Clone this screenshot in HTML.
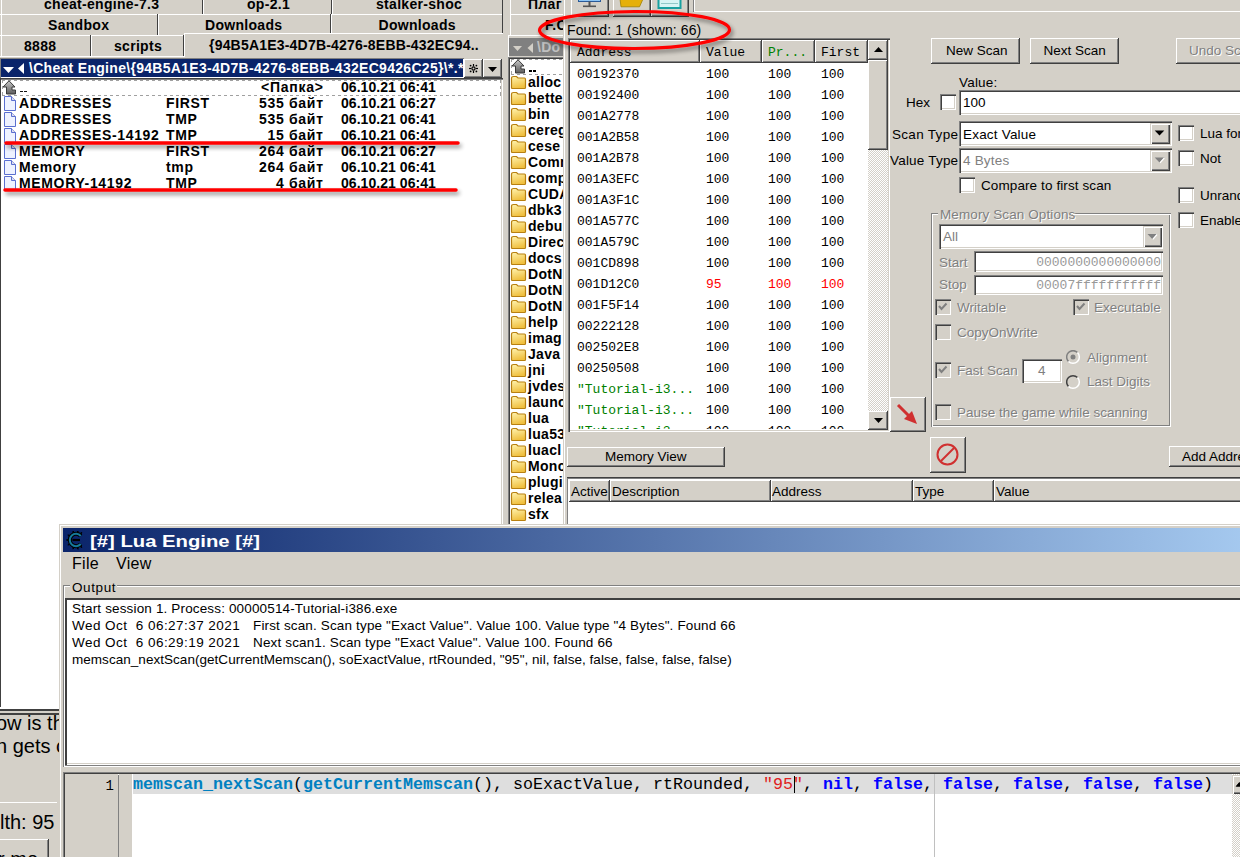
<!DOCTYPE html><html><head><meta charset="utf-8"><style>
html,body{margin:0;padding:0}
body{width:1240px;height:857px;overflow:hidden;background:#d4d0c8;position:relative;font-family:"Liberation Sans",sans-serif;color:#000}
.a{position:absolute;box-sizing:border-box}
.t{position:absolute;white-space:pre;line-height:1}
</style></head><body>
<div class="a" style="left:0px;top:-5px;width:203px;height:19px;background:#d4d0c8;"></div>
<div class="a" style="left:0px;top:-5px;width:203px;height:1px;background:#fff;"></div>
<div class="a" style="left:1px;top:-5px;width:1px;height:19px;background:#fff;"></div>
<div class="a" style="left:202px;top:-5px;width:1px;height:19px;background:#404040;"></div>
<div class="t" style="left:44px;top:-2.85px;font-size:14px;font-weight:bold;letter-spacing:0.3px;">cheat-engine-7.3</div>
<div class="a" style="left:203px;top:-5px;width:129px;height:19px;background:#d4d0c8;"></div>
<div class="a" style="left:203px;top:-5px;width:129px;height:1px;background:#fff;"></div>
<div class="a" style="left:203px;top:-5px;width:1px;height:19px;background:#fff;"></div>
<div class="a" style="left:331px;top:-5px;width:1px;height:19px;background:#404040;"></div>
<div class="t" style="left:247px;top:-2.85px;font-size:14px;font-weight:bold;letter-spacing:0.3px;">op-2.1</div>
<div class="a" style="left:332px;top:-5px;width:171px;height:19px;background:#d4d0c8;"></div>
<div class="a" style="left:332px;top:-5px;width:171px;height:1px;background:#fff;"></div>
<div class="a" style="left:332px;top:-5px;width:1px;height:19px;background:#fff;"></div>
<div class="a" style="left:502px;top:-5px;width:1px;height:19px;background:#404040;"></div>
<div class="t" style="left:376px;top:-2.85px;font-size:14px;font-weight:bold;letter-spacing:0.3px;">stalker-shoc</div>
<div class="a" style="left:0px;top:14px;width:158px;height:21px;background:#d4d0c8;"></div>
<div class="a" style="left:0px;top:14px;width:158px;height:1px;background:#fff;"></div>
<div class="a" style="left:1px;top:14px;width:1px;height:21px;background:#fff;"></div>
<div class="a" style="left:157px;top:14px;width:1px;height:21px;background:#404040;"></div>
<div class="t" style="left:48px;top:18.15px;font-size:14px;font-weight:bold;letter-spacing:0.3px;">Sandbox</div>
<div class="a" style="left:158px;top:14px;width:173px;height:21px;background:#d4d0c8;"></div>
<div class="a" style="left:158px;top:14px;width:173px;height:1px;background:#fff;"></div>
<div class="a" style="left:158px;top:14px;width:1px;height:21px;background:#fff;"></div>
<div class="a" style="left:330px;top:14px;width:1px;height:21px;background:#404040;"></div>
<div class="t" style="left:205px;top:18.15px;font-size:14px;font-weight:bold;letter-spacing:0.3px;">Downloads</div>
<div class="a" style="left:331px;top:14px;width:172px;height:21px;background:#d4d0c8;"></div>
<div class="a" style="left:331px;top:14px;width:172px;height:1px;background:#fff;"></div>
<div class="a" style="left:331px;top:14px;width:1px;height:21px;background:#fff;"></div>
<div class="a" style="left:502px;top:14px;width:1px;height:21px;background:#404040;"></div>
<div class="t" style="left:378.5px;top:18.15px;font-size:14px;font-weight:bold;letter-spacing:0.3px;">Downloads</div>
<div class="a" style="left:0px;top:35px;width:91px;height:22px;background:#d4d0c8;"></div>
<div class="a" style="left:0px;top:35px;width:91px;height:1px;background:#fff;"></div>
<div class="a" style="left:1px;top:35px;width:1px;height:22px;background:#fff;"></div>
<div class="a" style="left:90px;top:35px;width:1px;height:22px;background:#404040;"></div>
<div class="t" style="left:24px;top:39.15px;font-size:14px;font-weight:bold;letter-spacing:0.3px;">8888</div>
<div class="a" style="left:91px;top:35px;width:93px;height:22px;background:#d4d0c8;"></div>
<div class="a" style="left:91px;top:35px;width:93px;height:1px;background:#fff;"></div>
<div class="a" style="left:91px;top:35px;width:1px;height:22px;background:#fff;"></div>
<div class="a" style="left:183px;top:35px;width:1px;height:22px;background:#404040;"></div>
<div class="t" style="left:114px;top:39.15px;font-size:14px;font-weight:bold;letter-spacing:0.3px;">scripts</div>
<div class="a" style="left:0px;top:56px;width:184px;height:1px;background:#fff;"></div>
<div class="a" style="left:184px;top:33px;width:320px;height:25px;background:#d4d0c8;"></div>
<div class="a" style="left:503px;top:35px;width:1px;height:22px;background:#808080;"></div>
<div class="a" style="left:184px;top:33px;width:319px;height:1px;background:#fff;"></div>
<div class="a" style="left:184px;top:33px;width:1px;height:25px;background:#fff;"></div>
<div class="t" style="left:209px;top:38.15px;font-size:14px;font-weight:bold;letter-spacing:0.2px;">{94B5A1E3-4D7B-4276-8EBB-432EC94..</div>
<div class="a" style="left:0px;top:57px;width:504px;height:22px;background:#d4d0c8;"></div>
<div class="a" style="left:0px;top:58px;width:464px;height:20px;box-shadow:inset 1px 1px #808080,inset -1px -1px #fff;"></div>
<div class="a" style="left:1px;top:59px;width:462px;height:18px;background:#0a246a;"></div>
<svg class="a" style="left:0px;top:60px" width="30" height="16"><polygon points="3,7 14,7 8.5,13" fill="#fff"/><polygon points="24,3 24,14 18,8.5" fill="#fff"/></svg>
<div class="t" style="left:29px;top:61.15px;font-size:14px;font-weight:bold;color:#fff;letter-spacing:0.3px;">\Cheat Engine\{94B5A1E3-4D7B-4276-8EBB-432EC9426C25}\*.*</div>
<div class="a" style="left:464px;top:59px;width:19px;height:19px;background:#d4d0c8;box-shadow:inset -1px -1px #404040,inset 1px 1px #fff,inset -2px -2px #808080;"></div>
<svg class="a" style="left:464px;top:59px" width="19" height="19"><g stroke="#000" stroke-width="1.2"><circle cx="9.5" cy="9.5" r="1.6" fill="none"/><line x1="9.5" y1="5" x2="9.5" y2="7.2"/><line x1="9.5" y1="11.8" x2="9.5" y2="14"/><line x1="5" y1="9.5" x2="7.2" y2="9.5"/><line x1="11.8" y1="9.5" x2="14" y2="9.5"/></g><g fill="#000"><circle cx="6.6" cy="6.6" r="0.9"/><circle cx="12.4" cy="6.6" r="0.9"/><circle cx="6.6" cy="12.4" r="0.9"/><circle cx="12.4" cy="12.4" r="0.9"/></g></svg>
<div class="a" style="left:483px;top:59px;width:19px;height:19px;background:#d4d0c8;box-shadow:inset -1px -1px #404040,inset 1px 1px #fff,inset -2px -2px #808080;"></div>
<svg class="a" style="left:483px;top:59px" width="19" height="19"><polygon points="5,8 14,8 9.5,13" fill="#000"/></svg>
<div class="a" style="left:0px;top:78px;width:503px;height:630px;background:#fff;box-shadow:inset 1px 1px #404040,inset 0 2px #808080,inset -1px 0 #fff,inset -2px 0 #d4d0c8;"></div>
<div class="a" style="left:503px;top:35px;width:1px;height:672px;background:#808080;"></div>
<div class="a" style="left:2px;top:80px;width:499px;height:1px;background:repeating-linear-gradient(90deg,#a0a0a0 0 3px,transparent 3px 6px);"></div>
<div class="a" style="left:2px;top:95px;width:499px;height:1px;background:repeating-linear-gradient(90deg,#a0a0a0 0 3px,transparent 3px 6px);"></div>
<div class="a" style="left:2px;top:80px;width:1px;height:16px;background:repeating-linear-gradient(180deg,#a0a0a0 0 3px,transparent 3px 6px);"></div>
<div class="a" style="left:500px;top:80px;width:1px;height:16px;background:repeating-linear-gradient(180deg,#a0a0a0 0 3px,transparent 3px 6px);"></div>
<svg class="a" style="left:3px;top:80px" width="16" height="16" viewBox="0 0 16 16"><defs><linearGradient id="ug3" x1="0" y1="0" x2="0" y2="1"><stop offset="0" stop-color="#c8c8c8"/><stop offset="1" stop-color="#5a5a5a"/></linearGradient></defs><path d="M6,0.8 L12,7 L9,7 L9,10 L12.5,10 L12.5,14 L3.5,14 L3.5,7 L0,7 Z" fill="url(#ug3)" stroke="#3a3a3a" stroke-width="1" stroke-linejoin="round"/></svg>
<div class="a" style="left:20px;top:91px;width:2.5px;height:1.4px;background:#111;"></div>
<div class="a" style="left:24px;top:91px;width:2.5px;height:1.4px;background:#111;"></div>
<div class="t" style="left:341px;top:80.15px;font-size:14px;font-weight:bold;letter-spacing:0.05px;">06.10.21 06:41</div>
<div class="t" style="left:243.7px;width:80px;text-align:right;top:80.15px;font-size:14px;font-weight:bold;letter-spacing:0.75px;">&lt;Папка&gt;</div>
<svg class="a" style="left:3px;top:96px" width="14" height="15" viewBox="0 0 14 15"><path d="M1.5,0.5 H8.5 L12.5,4.5 V14.5 H1.5 Z" fill="#eef2ff" stroke="#5a6fd0"/><path d="M8.5,0.5 V4.5 H12.5" fill="#dde" stroke="#5a6fd0"/></svg>
<div class="t" style="left:19px;top:96.15px;font-size:14px;font-weight:bold;letter-spacing:0.65px;">ADDRESSES</div>
<div class="t" style="left:166px;top:96.15px;font-size:14px;font-weight:bold;letter-spacing:0.65px;">FIRST</div>
<div class="t" style="left:243.7px;width:80px;text-align:right;top:96.15px;font-size:14px;font-weight:bold;letter-spacing:0.7px;">535 байт</div>
<div class="t" style="left:341px;top:96.15px;font-size:14px;font-weight:bold;letter-spacing:0.05px;">06.10.21 06:27</div>
<svg class="a" style="left:3px;top:112px" width="14" height="15" viewBox="0 0 14 15"><path d="M1.5,0.5 H8.5 L12.5,4.5 V14.5 H1.5 Z" fill="#eef2ff" stroke="#5a6fd0"/><path d="M8.5,0.5 V4.5 H12.5" fill="#dde" stroke="#5a6fd0"/></svg>
<div class="t" style="left:19px;top:112.15px;font-size:14px;font-weight:bold;letter-spacing:0.65px;">ADDRESSES</div>
<div class="t" style="left:166px;top:112.15px;font-size:14px;font-weight:bold;letter-spacing:0.65px;">TMP</div>
<div class="t" style="left:243.7px;width:80px;text-align:right;top:112.15px;font-size:14px;font-weight:bold;letter-spacing:0.7px;">535 байт</div>
<div class="t" style="left:341px;top:112.15px;font-size:14px;font-weight:bold;letter-spacing:0.05px;">06.10.21 06:41</div>
<svg class="a" style="left:3px;top:128px" width="14" height="15" viewBox="0 0 14 15"><path d="M1.5,0.5 H8.5 L12.5,4.5 V14.5 H1.5 Z" fill="#eef2ff" stroke="#5a6fd0"/><path d="M8.5,0.5 V4.5 H12.5" fill="#dde" stroke="#5a6fd0"/></svg>
<div class="t" style="left:19px;top:128.15px;font-size:14px;font-weight:bold;letter-spacing:0.65px;">ADDRESSES-14192</div>
<div class="t" style="left:166px;top:128.15px;font-size:14px;font-weight:bold;letter-spacing:0.65px;">TMP</div>
<div class="t" style="left:243.7px;width:80px;text-align:right;top:128.15px;font-size:14px;font-weight:bold;letter-spacing:0.7px;">15 байт</div>
<div class="t" style="left:341px;top:128.15px;font-size:14px;font-weight:bold;letter-spacing:0.05px;">06.10.21 06:41</div>
<svg class="a" style="left:3px;top:144px" width="14" height="15" viewBox="0 0 14 15"><path d="M1.5,0.5 H8.5 L12.5,4.5 V14.5 H1.5 Z" fill="#eef2ff" stroke="#5a6fd0"/><path d="M8.5,0.5 V4.5 H12.5" fill="#dde" stroke="#5a6fd0"/></svg>
<div class="t" style="left:19px;top:144.15px;font-size:14px;font-weight:bold;letter-spacing:0.65px;">MEMORY</div>
<div class="t" style="left:166px;top:144.15px;font-size:14px;font-weight:bold;letter-spacing:0.65px;">FIRST</div>
<div class="t" style="left:243.7px;width:80px;text-align:right;top:144.15px;font-size:14px;font-weight:bold;letter-spacing:0.7px;">264 байт</div>
<div class="t" style="left:341px;top:144.15px;font-size:14px;font-weight:bold;letter-spacing:0.05px;">06.10.21 06:27</div>
<svg class="a" style="left:3px;top:160px" width="14" height="15" viewBox="0 0 14 15"><path d="M1.5,0.5 H8.5 L12.5,4.5 V14.5 H1.5 Z" fill="#eef2ff" stroke="#5a6fd0"/><path d="M8.5,0.5 V4.5 H12.5" fill="#dde" stroke="#5a6fd0"/></svg>
<div class="t" style="left:19px;top:160.15px;font-size:14px;font-weight:bold;letter-spacing:0.65px;">Memory</div>
<div class="t" style="left:166px;top:160.15px;font-size:14px;font-weight:bold;letter-spacing:0.65px;">tmp</div>
<div class="t" style="left:243.7px;width:80px;text-align:right;top:160.15px;font-size:14px;font-weight:bold;letter-spacing:0.7px;">264 байт</div>
<div class="t" style="left:341px;top:160.15px;font-size:14px;font-weight:bold;letter-spacing:0.05px;">06.10.21 06:41</div>
<svg class="a" style="left:3px;top:176px" width="14" height="15" viewBox="0 0 14 15"><path d="M1.5,0.5 H8.5 L12.5,4.5 V14.5 H1.5 Z" fill="#eef2ff" stroke="#5a6fd0"/><path d="M8.5,0.5 V4.5 H12.5" fill="#dde" stroke="#5a6fd0"/></svg>
<div class="t" style="left:19px;top:176.15px;font-size:14px;font-weight:bold;letter-spacing:0.65px;">MEMORY-14192</div>
<div class="t" style="left:166px;top:176.15px;font-size:14px;font-weight:bold;letter-spacing:0.65px;">TMP</div>
<div class="t" style="left:243.7px;width:80px;text-align:right;top:176.15px;font-size:14px;font-weight:bold;letter-spacing:0.7px;">4 байт</div>
<div class="t" style="left:341px;top:176.15px;font-size:14px;font-weight:bold;letter-spacing:0.05px;">06.10.21 06:41</div>
<div class="a" style="left:503px;top:0px;width:6px;height:525px;background:#d4d0c8;"></div>
<div class="a" style="left:510px;top:-5px;width:54px;height:19px;background:#d4d0c8;"></div>
<div class="a" style="left:510px;top:-5px;width:54px;height:1px;background:#fff;"></div>
<div class="a" style="left:510px;top:-5px;width:1px;height:19px;background:#fff;"></div>
<div class="a" style="left:563px;top:-5px;width:1px;height:19px;background:#404040;"></div>
<div class="t" style="left:528px;top:-2.85px;font-size:14px;font-weight:bold;letter-spacing:0.3px;">Плаг</div>
<div class="a" style="left:510px;top:14px;width:54px;height:22px;background:#d4d0c8;"></div>
<div class="a" style="left:510px;top:14px;width:54px;height:1px;background:#fff;"></div>
<div class="a" style="left:510px;top:14px;width:1px;height:22px;background:#fff;"></div>
<div class="a" style="left:563px;top:14px;width:1px;height:22px;background:#404040;"></div>
<div class="t" style="left:545px;top:18.15px;font-size:14px;font-weight:bold;letter-spacing:0.3px;">F.C</div>
<div class="a" style="left:508px;top:35px;width:57px;height:22px;background:#d4d0c8;box-shadow:inset 1px 1px #fff;"></div>
<div class="a" style="left:509px;top:38px;width:55px;height:18px;background:#808080;"></div>
<svg class="a" style="left:511px;top:41px" width="30" height="14"><polygon points="2,5 11,5 6.5,10" fill="#d4d0c8"/><polygon points="22,2 22,12 16.5,7" fill="#d4d0c8"/></svg>
<div class="t" style="left:537px;top:40.15px;font-size:14px;font-weight:bold;color:#c0c0c0;letter-spacing:0.3px;">\Do</div>
<div class="a" style="left:508px;top:57px;width:57px;height:470px;background:#fff;box-shadow:inset 1px 1px #808080,inset 2px 2px #404040;"></div>
<div class="a" style="left:511px;top:59px;width:53px;height:1px;background:repeating-linear-gradient(90deg,#a0a0a0 0 3px,transparent 3px 6px);"></div>
<div class="a" style="left:511px;top:74px;width:53px;height:1px;background:repeating-linear-gradient(90deg,#a0a0a0 0 3px,transparent 3px 6px);"></div>
<div class="a" style="left:511px;top:59px;width:1px;height:16px;background:repeating-linear-gradient(180deg,#a0a0a0 0 3px,transparent 3px 6px);"></div>
<svg class="a" style="left:512px;top:59px" width="16" height="16" viewBox="0 0 16 16"><defs><linearGradient id="ug512" x1="0" y1="0" x2="0" y2="1"><stop offset="0" stop-color="#c8c8c8"/><stop offset="1" stop-color="#5a5a5a"/></linearGradient></defs><path d="M6,0.8 L12,7 L9,7 L9,10 L12.5,10 L12.5,14 L3.5,14 L3.5,7 L0,7 Z" fill="url(#ug512)" stroke="#3a3a3a" stroke-width="1" stroke-linejoin="round"/></svg>
<div class="a" style="left:529px;top:70px;width:3px;height:1.6px;background:#000;"></div>
<div class="a" style="left:533px;top:70px;width:3px;height:1.6px;background:#000;"></div>
<svg class="a" style="left:510px;top:75px" width="17" height="15" viewBox="0 0 17 15"><defs><linearGradient id="fg" x1="0" y1="0" x2="0.3" y2="1"><stop offset="0" stop-color="#fff4b0"/><stop offset="1" stop-color="#f0c040"/></linearGradient></defs><path d="M1.5,3.5 Q1.5,1.5 3.5,1.5 H6.5 L8,3 H14.5 Q15.5,3 15.5,4.5 V12.5 Q15.5,13.5 14.5,13.5 H2.5 Q1.5,13.5 1.5,12.5 Z" fill="url(#fg)" stroke="#b88010" stroke-width="1.2"/></svg>
<div class="t" style="left:528px;top:75.15px;font-size:14px;font-weight:bold;letter-spacing:0.3px;">alloc</div>
<svg class="a" style="left:510px;top:91px" width="17" height="15" viewBox="0 0 17 15"><defs><linearGradient id="fg" x1="0" y1="0" x2="0.3" y2="1"><stop offset="0" stop-color="#fff4b0"/><stop offset="1" stop-color="#f0c040"/></linearGradient></defs><path d="M1.5,3.5 Q1.5,1.5 3.5,1.5 H6.5 L8,3 H14.5 Q15.5,3 15.5,4.5 V12.5 Q15.5,13.5 14.5,13.5 H2.5 Q1.5,13.5 1.5,12.5 Z" fill="url(#fg)" stroke="#b88010" stroke-width="1.2"/></svg>
<div class="t" style="left:528px;top:91.15px;font-size:14px;font-weight:bold;letter-spacing:0.3px;">bette</div>
<svg class="a" style="left:510px;top:107px" width="17" height="15" viewBox="0 0 17 15"><defs><linearGradient id="fg" x1="0" y1="0" x2="0.3" y2="1"><stop offset="0" stop-color="#fff4b0"/><stop offset="1" stop-color="#f0c040"/></linearGradient></defs><path d="M1.5,3.5 Q1.5,1.5 3.5,1.5 H6.5 L8,3 H14.5 Q15.5,3 15.5,4.5 V12.5 Q15.5,13.5 14.5,13.5 H2.5 Q1.5,13.5 1.5,12.5 Z" fill="url(#fg)" stroke="#b88010" stroke-width="1.2"/></svg>
<div class="t" style="left:528px;top:107.15px;font-size:14px;font-weight:bold;letter-spacing:0.3px;">bin</div>
<svg class="a" style="left:510px;top:123px" width="17" height="15" viewBox="0 0 17 15"><defs><linearGradient id="fg" x1="0" y1="0" x2="0.3" y2="1"><stop offset="0" stop-color="#fff4b0"/><stop offset="1" stop-color="#f0c040"/></linearGradient></defs><path d="M1.5,3.5 Q1.5,1.5 3.5,1.5 H6.5 L8,3 H14.5 Q15.5,3 15.5,4.5 V12.5 Q15.5,13.5 14.5,13.5 H2.5 Q1.5,13.5 1.5,12.5 Z" fill="url(#fg)" stroke="#b88010" stroke-width="1.2"/></svg>
<div class="t" style="left:528px;top:123.15px;font-size:14px;font-weight:bold;letter-spacing:0.3px;">cereg</div>
<svg class="a" style="left:510px;top:139px" width="17" height="15" viewBox="0 0 17 15"><defs><linearGradient id="fg" x1="0" y1="0" x2="0.3" y2="1"><stop offset="0" stop-color="#fff4b0"/><stop offset="1" stop-color="#f0c040"/></linearGradient></defs><path d="M1.5,3.5 Q1.5,1.5 3.5,1.5 H6.5 L8,3 H14.5 Q15.5,3 15.5,4.5 V12.5 Q15.5,13.5 14.5,13.5 H2.5 Q1.5,13.5 1.5,12.5 Z" fill="url(#fg)" stroke="#b88010" stroke-width="1.2"/></svg>
<div class="t" style="left:528px;top:139.15px;font-size:14px;font-weight:bold;letter-spacing:0.3px;">cese</div>
<svg class="a" style="left:510px;top:155px" width="17" height="15" viewBox="0 0 17 15"><defs><linearGradient id="fg" x1="0" y1="0" x2="0.3" y2="1"><stop offset="0" stop-color="#fff4b0"/><stop offset="1" stop-color="#f0c040"/></linearGradient></defs><path d="M1.5,3.5 Q1.5,1.5 3.5,1.5 H6.5 L8,3 H14.5 Q15.5,3 15.5,4.5 V12.5 Q15.5,13.5 14.5,13.5 H2.5 Q1.5,13.5 1.5,12.5 Z" fill="url(#fg)" stroke="#b88010" stroke-width="1.2"/></svg>
<div class="t" style="left:528px;top:155.15px;font-size:14px;font-weight:bold;letter-spacing:0.3px;">Comn</div>
<svg class="a" style="left:510px;top:171px" width="17" height="15" viewBox="0 0 17 15"><defs><linearGradient id="fg" x1="0" y1="0" x2="0.3" y2="1"><stop offset="0" stop-color="#fff4b0"/><stop offset="1" stop-color="#f0c040"/></linearGradient></defs><path d="M1.5,3.5 Q1.5,1.5 3.5,1.5 H6.5 L8,3 H14.5 Q15.5,3 15.5,4.5 V12.5 Q15.5,13.5 14.5,13.5 H2.5 Q1.5,13.5 1.5,12.5 Z" fill="url(#fg)" stroke="#b88010" stroke-width="1.2"/></svg>
<div class="t" style="left:528px;top:171.15px;font-size:14px;font-weight:bold;letter-spacing:0.3px;">comp</div>
<svg class="a" style="left:510px;top:187px" width="17" height="15" viewBox="0 0 17 15"><defs><linearGradient id="fg" x1="0" y1="0" x2="0.3" y2="1"><stop offset="0" stop-color="#fff4b0"/><stop offset="1" stop-color="#f0c040"/></linearGradient></defs><path d="M1.5,3.5 Q1.5,1.5 3.5,1.5 H6.5 L8,3 H14.5 Q15.5,3 15.5,4.5 V12.5 Q15.5,13.5 14.5,13.5 H2.5 Q1.5,13.5 1.5,12.5 Z" fill="url(#fg)" stroke="#b88010" stroke-width="1.2"/></svg>
<div class="t" style="left:528px;top:187.15px;font-size:14px;font-weight:bold;letter-spacing:0.3px;">CUDA</div>
<svg class="a" style="left:510px;top:203px" width="17" height="15" viewBox="0 0 17 15"><defs><linearGradient id="fg" x1="0" y1="0" x2="0.3" y2="1"><stop offset="0" stop-color="#fff4b0"/><stop offset="1" stop-color="#f0c040"/></linearGradient></defs><path d="M1.5,3.5 Q1.5,1.5 3.5,1.5 H6.5 L8,3 H14.5 Q15.5,3 15.5,4.5 V12.5 Q15.5,13.5 14.5,13.5 H2.5 Q1.5,13.5 1.5,12.5 Z" fill="url(#fg)" stroke="#b88010" stroke-width="1.2"/></svg>
<div class="t" style="left:528px;top:203.15px;font-size:14px;font-weight:bold;letter-spacing:0.3px;">dbk3</div>
<svg class="a" style="left:510px;top:219px" width="17" height="15" viewBox="0 0 17 15"><defs><linearGradient id="fg" x1="0" y1="0" x2="0.3" y2="1"><stop offset="0" stop-color="#fff4b0"/><stop offset="1" stop-color="#f0c040"/></linearGradient></defs><path d="M1.5,3.5 Q1.5,1.5 3.5,1.5 H6.5 L8,3 H14.5 Q15.5,3 15.5,4.5 V12.5 Q15.5,13.5 14.5,13.5 H2.5 Q1.5,13.5 1.5,12.5 Z" fill="url(#fg)" stroke="#b88010" stroke-width="1.2"/></svg>
<div class="t" style="left:528px;top:219.15px;font-size:14px;font-weight:bold;letter-spacing:0.3px;">debu</div>
<svg class="a" style="left:510px;top:235px" width="17" height="15" viewBox="0 0 17 15"><defs><linearGradient id="fg" x1="0" y1="0" x2="0.3" y2="1"><stop offset="0" stop-color="#fff4b0"/><stop offset="1" stop-color="#f0c040"/></linearGradient></defs><path d="M1.5,3.5 Q1.5,1.5 3.5,1.5 H6.5 L8,3 H14.5 Q15.5,3 15.5,4.5 V12.5 Q15.5,13.5 14.5,13.5 H2.5 Q1.5,13.5 1.5,12.5 Z" fill="url(#fg)" stroke="#b88010" stroke-width="1.2"/></svg>
<div class="t" style="left:528px;top:235.15px;font-size:14px;font-weight:bold;letter-spacing:0.3px;">Direc</div>
<svg class="a" style="left:510px;top:251px" width="17" height="15" viewBox="0 0 17 15"><defs><linearGradient id="fg" x1="0" y1="0" x2="0.3" y2="1"><stop offset="0" stop-color="#fff4b0"/><stop offset="1" stop-color="#f0c040"/></linearGradient></defs><path d="M1.5,3.5 Q1.5,1.5 3.5,1.5 H6.5 L8,3 H14.5 Q15.5,3 15.5,4.5 V12.5 Q15.5,13.5 14.5,13.5 H2.5 Q1.5,13.5 1.5,12.5 Z" fill="url(#fg)" stroke="#b88010" stroke-width="1.2"/></svg>
<div class="t" style="left:528px;top:251.15px;font-size:14px;font-weight:bold;letter-spacing:0.3px;">docs</div>
<svg class="a" style="left:510px;top:267px" width="17" height="15" viewBox="0 0 17 15"><defs><linearGradient id="fg" x1="0" y1="0" x2="0.3" y2="1"><stop offset="0" stop-color="#fff4b0"/><stop offset="1" stop-color="#f0c040"/></linearGradient></defs><path d="M1.5,3.5 Q1.5,1.5 3.5,1.5 H6.5 L8,3 H14.5 Q15.5,3 15.5,4.5 V12.5 Q15.5,13.5 14.5,13.5 H2.5 Q1.5,13.5 1.5,12.5 Z" fill="url(#fg)" stroke="#b88010" stroke-width="1.2"/></svg>
<div class="t" style="left:528px;top:267.15px;font-size:14px;font-weight:bold;letter-spacing:0.3px;">DotN</div>
<svg class="a" style="left:510px;top:283px" width="17" height="15" viewBox="0 0 17 15"><defs><linearGradient id="fg" x1="0" y1="0" x2="0.3" y2="1"><stop offset="0" stop-color="#fff4b0"/><stop offset="1" stop-color="#f0c040"/></linearGradient></defs><path d="M1.5,3.5 Q1.5,1.5 3.5,1.5 H6.5 L8,3 H14.5 Q15.5,3 15.5,4.5 V12.5 Q15.5,13.5 14.5,13.5 H2.5 Q1.5,13.5 1.5,12.5 Z" fill="url(#fg)" stroke="#b88010" stroke-width="1.2"/></svg>
<div class="t" style="left:528px;top:283.15px;font-size:14px;font-weight:bold;letter-spacing:0.3px;">DotN</div>
<svg class="a" style="left:510px;top:299px" width="17" height="15" viewBox="0 0 17 15"><defs><linearGradient id="fg" x1="0" y1="0" x2="0.3" y2="1"><stop offset="0" stop-color="#fff4b0"/><stop offset="1" stop-color="#f0c040"/></linearGradient></defs><path d="M1.5,3.5 Q1.5,1.5 3.5,1.5 H6.5 L8,3 H14.5 Q15.5,3 15.5,4.5 V12.5 Q15.5,13.5 14.5,13.5 H2.5 Q1.5,13.5 1.5,12.5 Z" fill="url(#fg)" stroke="#b88010" stroke-width="1.2"/></svg>
<div class="t" style="left:528px;top:299.15px;font-size:14px;font-weight:bold;letter-spacing:0.3px;">DotN</div>
<svg class="a" style="left:510px;top:315px" width="17" height="15" viewBox="0 0 17 15"><defs><linearGradient id="fg" x1="0" y1="0" x2="0.3" y2="1"><stop offset="0" stop-color="#fff4b0"/><stop offset="1" stop-color="#f0c040"/></linearGradient></defs><path d="M1.5,3.5 Q1.5,1.5 3.5,1.5 H6.5 L8,3 H14.5 Q15.5,3 15.5,4.5 V12.5 Q15.5,13.5 14.5,13.5 H2.5 Q1.5,13.5 1.5,12.5 Z" fill="url(#fg)" stroke="#b88010" stroke-width="1.2"/></svg>
<div class="t" style="left:528px;top:315.15px;font-size:14px;font-weight:bold;letter-spacing:0.3px;">help</div>
<svg class="a" style="left:510px;top:331px" width="17" height="15" viewBox="0 0 17 15"><defs><linearGradient id="fg" x1="0" y1="0" x2="0.3" y2="1"><stop offset="0" stop-color="#fff4b0"/><stop offset="1" stop-color="#f0c040"/></linearGradient></defs><path d="M1.5,3.5 Q1.5,1.5 3.5,1.5 H6.5 L8,3 H14.5 Q15.5,3 15.5,4.5 V12.5 Q15.5,13.5 14.5,13.5 H2.5 Q1.5,13.5 1.5,12.5 Z" fill="url(#fg)" stroke="#b88010" stroke-width="1.2"/></svg>
<div class="t" style="left:528px;top:331.15px;font-size:14px;font-weight:bold;letter-spacing:0.3px;">imag</div>
<svg class="a" style="left:510px;top:347px" width="17" height="15" viewBox="0 0 17 15"><defs><linearGradient id="fg" x1="0" y1="0" x2="0.3" y2="1"><stop offset="0" stop-color="#fff4b0"/><stop offset="1" stop-color="#f0c040"/></linearGradient></defs><path d="M1.5,3.5 Q1.5,1.5 3.5,1.5 H6.5 L8,3 H14.5 Q15.5,3 15.5,4.5 V12.5 Q15.5,13.5 14.5,13.5 H2.5 Q1.5,13.5 1.5,12.5 Z" fill="url(#fg)" stroke="#b88010" stroke-width="1.2"/></svg>
<div class="t" style="left:528px;top:347.15px;font-size:14px;font-weight:bold;letter-spacing:0.3px;">Java</div>
<svg class="a" style="left:510px;top:363px" width="17" height="15" viewBox="0 0 17 15"><defs><linearGradient id="fg" x1="0" y1="0" x2="0.3" y2="1"><stop offset="0" stop-color="#fff4b0"/><stop offset="1" stop-color="#f0c040"/></linearGradient></defs><path d="M1.5,3.5 Q1.5,1.5 3.5,1.5 H6.5 L8,3 H14.5 Q15.5,3 15.5,4.5 V12.5 Q15.5,13.5 14.5,13.5 H2.5 Q1.5,13.5 1.5,12.5 Z" fill="url(#fg)" stroke="#b88010" stroke-width="1.2"/></svg>
<div class="t" style="left:528px;top:363.15px;font-size:14px;font-weight:bold;letter-spacing:0.3px;">jni</div>
<svg class="a" style="left:510px;top:379px" width="17" height="15" viewBox="0 0 17 15"><defs><linearGradient id="fg" x1="0" y1="0" x2="0.3" y2="1"><stop offset="0" stop-color="#fff4b0"/><stop offset="1" stop-color="#f0c040"/></linearGradient></defs><path d="M1.5,3.5 Q1.5,1.5 3.5,1.5 H6.5 L8,3 H14.5 Q15.5,3 15.5,4.5 V12.5 Q15.5,13.5 14.5,13.5 H2.5 Q1.5,13.5 1.5,12.5 Z" fill="url(#fg)" stroke="#b88010" stroke-width="1.2"/></svg>
<div class="t" style="left:528px;top:379.15px;font-size:14px;font-weight:bold;letter-spacing:0.3px;">jvdes</div>
<svg class="a" style="left:510px;top:395px" width="17" height="15" viewBox="0 0 17 15"><defs><linearGradient id="fg" x1="0" y1="0" x2="0.3" y2="1"><stop offset="0" stop-color="#fff4b0"/><stop offset="1" stop-color="#f0c040"/></linearGradient></defs><path d="M1.5,3.5 Q1.5,1.5 3.5,1.5 H6.5 L8,3 H14.5 Q15.5,3 15.5,4.5 V12.5 Q15.5,13.5 14.5,13.5 H2.5 Q1.5,13.5 1.5,12.5 Z" fill="url(#fg)" stroke="#b88010" stroke-width="1.2"/></svg>
<div class="t" style="left:528px;top:395.15px;font-size:14px;font-weight:bold;letter-spacing:0.3px;">launc</div>
<svg class="a" style="left:510px;top:411px" width="17" height="15" viewBox="0 0 17 15"><defs><linearGradient id="fg" x1="0" y1="0" x2="0.3" y2="1"><stop offset="0" stop-color="#fff4b0"/><stop offset="1" stop-color="#f0c040"/></linearGradient></defs><path d="M1.5,3.5 Q1.5,1.5 3.5,1.5 H6.5 L8,3 H14.5 Q15.5,3 15.5,4.5 V12.5 Q15.5,13.5 14.5,13.5 H2.5 Q1.5,13.5 1.5,12.5 Z" fill="url(#fg)" stroke="#b88010" stroke-width="1.2"/></svg>
<div class="t" style="left:528px;top:411.15px;font-size:14px;font-weight:bold;letter-spacing:0.3px;">lua</div>
<svg class="a" style="left:510px;top:427px" width="17" height="15" viewBox="0 0 17 15"><defs><linearGradient id="fg" x1="0" y1="0" x2="0.3" y2="1"><stop offset="0" stop-color="#fff4b0"/><stop offset="1" stop-color="#f0c040"/></linearGradient></defs><path d="M1.5,3.5 Q1.5,1.5 3.5,1.5 H6.5 L8,3 H14.5 Q15.5,3 15.5,4.5 V12.5 Q15.5,13.5 14.5,13.5 H2.5 Q1.5,13.5 1.5,12.5 Z" fill="url(#fg)" stroke="#b88010" stroke-width="1.2"/></svg>
<div class="t" style="left:528px;top:427.15px;font-size:14px;font-weight:bold;letter-spacing:0.3px;">lua53</div>
<svg class="a" style="left:510px;top:443px" width="17" height="15" viewBox="0 0 17 15"><defs><linearGradient id="fg" x1="0" y1="0" x2="0.3" y2="1"><stop offset="0" stop-color="#fff4b0"/><stop offset="1" stop-color="#f0c040"/></linearGradient></defs><path d="M1.5,3.5 Q1.5,1.5 3.5,1.5 H6.5 L8,3 H14.5 Q15.5,3 15.5,4.5 V12.5 Q15.5,13.5 14.5,13.5 H2.5 Q1.5,13.5 1.5,12.5 Z" fill="url(#fg)" stroke="#b88010" stroke-width="1.2"/></svg>
<div class="t" style="left:528px;top:443.15px;font-size:14px;font-weight:bold;letter-spacing:0.3px;">luacl</div>
<svg class="a" style="left:510px;top:459px" width="17" height="15" viewBox="0 0 17 15"><defs><linearGradient id="fg" x1="0" y1="0" x2="0.3" y2="1"><stop offset="0" stop-color="#fff4b0"/><stop offset="1" stop-color="#f0c040"/></linearGradient></defs><path d="M1.5,3.5 Q1.5,1.5 3.5,1.5 H6.5 L8,3 H14.5 Q15.5,3 15.5,4.5 V12.5 Q15.5,13.5 14.5,13.5 H2.5 Q1.5,13.5 1.5,12.5 Z" fill="url(#fg)" stroke="#b88010" stroke-width="1.2"/></svg>
<div class="t" style="left:528px;top:459.15px;font-size:14px;font-weight:bold;letter-spacing:0.3px;">Monc</div>
<svg class="a" style="left:510px;top:475px" width="17" height="15" viewBox="0 0 17 15"><defs><linearGradient id="fg" x1="0" y1="0" x2="0.3" y2="1"><stop offset="0" stop-color="#fff4b0"/><stop offset="1" stop-color="#f0c040"/></linearGradient></defs><path d="M1.5,3.5 Q1.5,1.5 3.5,1.5 H6.5 L8,3 H14.5 Q15.5,3 15.5,4.5 V12.5 Q15.5,13.5 14.5,13.5 H2.5 Q1.5,13.5 1.5,12.5 Z" fill="url(#fg)" stroke="#b88010" stroke-width="1.2"/></svg>
<div class="t" style="left:528px;top:475.15px;font-size:14px;font-weight:bold;letter-spacing:0.3px;">plugi</div>
<svg class="a" style="left:510px;top:491px" width="17" height="15" viewBox="0 0 17 15"><defs><linearGradient id="fg" x1="0" y1="0" x2="0.3" y2="1"><stop offset="0" stop-color="#fff4b0"/><stop offset="1" stop-color="#f0c040"/></linearGradient></defs><path d="M1.5,3.5 Q1.5,1.5 3.5,1.5 H6.5 L8,3 H14.5 Q15.5,3 15.5,4.5 V12.5 Q15.5,13.5 14.5,13.5 H2.5 Q1.5,13.5 1.5,12.5 Z" fill="url(#fg)" stroke="#b88010" stroke-width="1.2"/></svg>
<div class="t" style="left:528px;top:491.15px;font-size:14px;font-weight:bold;letter-spacing:0.3px;">relea</div>
<svg class="a" style="left:510px;top:507px" width="17" height="15" viewBox="0 0 17 15"><defs><linearGradient id="fg" x1="0" y1="0" x2="0.3" y2="1"><stop offset="0" stop-color="#fff4b0"/><stop offset="1" stop-color="#f0c040"/></linearGradient></defs><path d="M1.5,3.5 Q1.5,1.5 3.5,1.5 H6.5 L8,3 H14.5 Q15.5,3 15.5,4.5 V12.5 Q15.5,13.5 14.5,13.5 H2.5 Q1.5,13.5 1.5,12.5 Z" fill="url(#fg)" stroke="#b88010" stroke-width="1.2"/></svg>
<div class="t" style="left:528px;top:507.15px;font-size:14px;font-weight:bold;letter-spacing:0.3px;">sfx</div>
<div class="a" style="left:563px;top:0px;width:2px;height:527px;background:#d4d0c8;"></div>
<div class="a" style="left:564px;top:0px;width:676px;height:527px;background:#d4d0c8;"></div>
<div class="a" style="left:564px;top:0px;width:1px;height:527px;background:#fff;"></div>
<div class="a" style="left:571px;top:-10px;width:38px;height:27px;background:#d4d0c8;box-shadow:inset -1px -1px #404040,inset 1px 0 #fff,inset -2px -2px #808080;"></div>
<div class="a" style="left:613px;top:-10px;width:38px;height:27px;background:#d4d0c8;box-shadow:inset -1px -1px #404040,inset 1px 0 #fff,inset -2px -2px #808080;"></div>
<div class="a" style="left:651px;top:-10px;width:38px;height:27px;background:#d4d0c8;box-shadow:inset -1px -1px #404040,inset 1px 0 #fff,inset -2px -2px #808080;"></div>
<div class="a" style="left:694px;top:11px;width:546px;height:1px;background:#fff;"></div>
<div class="a" style="left:693px;top:0px;width:1px;height:12px;background:#808080;"></div>
<div class="a" style="left:694px;top:0px;width:1px;height:11px;background:#fff;"></div>
<svg class="a" style="left:565px;top:0px" width="130" height="14"><rect x="13.5" y="-6" width="22" height="7.5" fill="#8cc4f4" stroke="#2a5a98"/><rect x="23.5" y="1.5" width="2" height="5" fill="#555"/><rect x="18" y="5.5" width="13" height="1.6" fill="#555"/><polygon points="55,-1 78,-1 74.5,6.8 56,6.8" fill="#e5b00a" stroke="#a08000" stroke-width="0.8"/><rect x="93.5" y="-6" width="22" height="14" fill="#d6f4f4" stroke="#18a0a0" stroke-width="2"/><line x1="96" y1="3.5" x2="113" y2="3.5" stroke="#90c8c8"/></svg>
<div class="t" style="left:567px;top:23.15px;font-size:14px;letter-spacing:0.1px;">Found: 1 (shown: 66)</div>
<div class="a" style="left:568px;top:38px;width:322px;height:394px;background:#fff;box-shadow:inset 1px 1px #808080,inset 2px 2px #404040,inset -1px -1px #fff,inset -2px -2px #d4d0c8;"></div>
<div class="a" style="left:570px;top:40px;width:130px;height:23px;background:#d4d0c8;box-shadow:inset -1px -1px #404040,inset 1px 1px #fff,inset -2px -2px #808080;"></div>
<div class="a" style="left:700px;top:40px;width:62px;height:23px;background:#d4d0c8;box-shadow:inset -1px -1px #404040,inset 1px 1px #fff,inset -2px -2px #808080;"></div>
<div class="a" style="left:762px;top:40px;width:53px;height:23px;background:#d4d0c8;box-shadow:inset -1px -1px #404040,inset 1px 1px #fff,inset -2px -2px #808080;"></div>
<div class="a" style="left:815px;top:40px;width:53px;height:23px;background:#d4d0c8;box-shadow:inset -1px -1px #404040,inset 1px 1px #fff,inset -2px -2px #808080;"></div>
<div class="t" style="left:577px;top:46.04px;font-size:13px;font-family:'Liberation Mono';">Address</div>
<div class="t" style="left:706px;top:46.04px;font-size:13px;font-family:'Liberation Mono';">Value</div>
<div class="t" style="left:768px;top:46.04px;font-size:13px;font-family:'Liberation Mono';color:#008000;">Pr...</div>
<div class="t" style="left:821px;top:46.04px;font-size:13px;font-family:'Liberation Mono';">First</div>
<div class="a" style="left:571px;top:63px;width:297px;height:366px;overflow:hidden">
<div class="t" style="left:6px;top:4.54px;font-size:13px;font-family:'Liberation Mono';">00192370</div>
<div class="t" style="left:135px;top:4.54px;font-size:13px;font-family:'Liberation Mono';">100</div>
<div class="t" style="left:197px;top:4.54px;font-size:13px;font-family:'Liberation Mono';">100</div>
<div class="t" style="left:250px;top:4.54px;font-size:13px;font-family:'Liberation Mono';">100</div>
<div class="t" style="left:6px;top:25.54px;font-size:13px;font-family:'Liberation Mono';">00192400</div>
<div class="t" style="left:135px;top:25.54px;font-size:13px;font-family:'Liberation Mono';">100</div>
<div class="t" style="left:197px;top:25.54px;font-size:13px;font-family:'Liberation Mono';">100</div>
<div class="t" style="left:250px;top:25.54px;font-size:13px;font-family:'Liberation Mono';">100</div>
<div class="t" style="left:6px;top:46.54px;font-size:13px;font-family:'Liberation Mono';">001A2778</div>
<div class="t" style="left:135px;top:46.54px;font-size:13px;font-family:'Liberation Mono';">100</div>
<div class="t" style="left:197px;top:46.54px;font-size:13px;font-family:'Liberation Mono';">100</div>
<div class="t" style="left:250px;top:46.54px;font-size:13px;font-family:'Liberation Mono';">100</div>
<div class="t" style="left:6px;top:67.54px;font-size:13px;font-family:'Liberation Mono';">001A2B58</div>
<div class="t" style="left:135px;top:67.54px;font-size:13px;font-family:'Liberation Mono';">100</div>
<div class="t" style="left:197px;top:67.54px;font-size:13px;font-family:'Liberation Mono';">100</div>
<div class="t" style="left:250px;top:67.54px;font-size:13px;font-family:'Liberation Mono';">100</div>
<div class="t" style="left:6px;top:88.54px;font-size:13px;font-family:'Liberation Mono';">001A2B78</div>
<div class="t" style="left:135px;top:88.54px;font-size:13px;font-family:'Liberation Mono';">100</div>
<div class="t" style="left:197px;top:88.54px;font-size:13px;font-family:'Liberation Mono';">100</div>
<div class="t" style="left:250px;top:88.54px;font-size:13px;font-family:'Liberation Mono';">100</div>
<div class="t" style="left:6px;top:109.54px;font-size:13px;font-family:'Liberation Mono';">001A3EFC</div>
<div class="t" style="left:135px;top:109.54px;font-size:13px;font-family:'Liberation Mono';">100</div>
<div class="t" style="left:197px;top:109.54px;font-size:13px;font-family:'Liberation Mono';">100</div>
<div class="t" style="left:250px;top:109.54px;font-size:13px;font-family:'Liberation Mono';">100</div>
<div class="t" style="left:6px;top:130.54px;font-size:13px;font-family:'Liberation Mono';">001A3F1C</div>
<div class="t" style="left:135px;top:130.54px;font-size:13px;font-family:'Liberation Mono';">100</div>
<div class="t" style="left:197px;top:130.54px;font-size:13px;font-family:'Liberation Mono';">100</div>
<div class="t" style="left:250px;top:130.54px;font-size:13px;font-family:'Liberation Mono';">100</div>
<div class="t" style="left:6px;top:151.54px;font-size:13px;font-family:'Liberation Mono';">001A577C</div>
<div class="t" style="left:135px;top:151.54px;font-size:13px;font-family:'Liberation Mono';">100</div>
<div class="t" style="left:197px;top:151.54px;font-size:13px;font-family:'Liberation Mono';">100</div>
<div class="t" style="left:250px;top:151.54px;font-size:13px;font-family:'Liberation Mono';">100</div>
<div class="t" style="left:6px;top:172.54px;font-size:13px;font-family:'Liberation Mono';">001A579C</div>
<div class="t" style="left:135px;top:172.54px;font-size:13px;font-family:'Liberation Mono';">100</div>
<div class="t" style="left:197px;top:172.54px;font-size:13px;font-family:'Liberation Mono';">100</div>
<div class="t" style="left:250px;top:172.54px;font-size:13px;font-family:'Liberation Mono';">100</div>
<div class="t" style="left:6px;top:193.54px;font-size:13px;font-family:'Liberation Mono';">001CD898</div>
<div class="t" style="left:135px;top:193.54px;font-size:13px;font-family:'Liberation Mono';">100</div>
<div class="t" style="left:197px;top:193.54px;font-size:13px;font-family:'Liberation Mono';">100</div>
<div class="t" style="left:250px;top:193.54px;font-size:13px;font-family:'Liberation Mono';">100</div>
<div class="t" style="left:6px;top:214.54px;font-size:13px;font-family:'Liberation Mono';">001D12C0</div>
<div class="t" style="left:135px;top:214.54px;font-size:13px;font-family:'Liberation Mono';color:#ff0000;">95</div>
<div class="t" style="left:197px;top:214.54px;font-size:13px;font-family:'Liberation Mono';color:#ff0000;">100</div>
<div class="t" style="left:250px;top:214.54px;font-size:13px;font-family:'Liberation Mono';color:#ff0000;">100</div>
<div class="t" style="left:6px;top:235.54px;font-size:13px;font-family:'Liberation Mono';">001F5F14</div>
<div class="t" style="left:135px;top:235.54px;font-size:13px;font-family:'Liberation Mono';">100</div>
<div class="t" style="left:197px;top:235.54px;font-size:13px;font-family:'Liberation Mono';">100</div>
<div class="t" style="left:250px;top:235.54px;font-size:13px;font-family:'Liberation Mono';">100</div>
<div class="t" style="left:6px;top:256.54px;font-size:13px;font-family:'Liberation Mono';">00222128</div>
<div class="t" style="left:135px;top:256.54px;font-size:13px;font-family:'Liberation Mono';">100</div>
<div class="t" style="left:197px;top:256.54px;font-size:13px;font-family:'Liberation Mono';">100</div>
<div class="t" style="left:250px;top:256.54px;font-size:13px;font-family:'Liberation Mono';">100</div>
<div class="t" style="left:6px;top:277.54px;font-size:13px;font-family:'Liberation Mono';">002502E8</div>
<div class="t" style="left:135px;top:277.54px;font-size:13px;font-family:'Liberation Mono';">100</div>
<div class="t" style="left:197px;top:277.54px;font-size:13px;font-family:'Liberation Mono';">100</div>
<div class="t" style="left:250px;top:277.54px;font-size:13px;font-family:'Liberation Mono';">100</div>
<div class="t" style="left:6px;top:298.54px;font-size:13px;font-family:'Liberation Mono';">00250508</div>
<div class="t" style="left:135px;top:298.54px;font-size:13px;font-family:'Liberation Mono';">100</div>
<div class="t" style="left:197px;top:298.54px;font-size:13px;font-family:'Liberation Mono';">100</div>
<div class="t" style="left:250px;top:298.54px;font-size:13px;font-family:'Liberation Mono';">100</div>
<div class="t" style="left:6px;top:319.54px;font-size:13px;font-family:'Liberation Mono';color:#008000;">"Tutorial-i3...</div>
<div class="t" style="left:135px;top:319.54px;font-size:13px;font-family:'Liberation Mono';">100</div>
<div class="t" style="left:197px;top:319.54px;font-size:13px;font-family:'Liberation Mono';">100</div>
<div class="t" style="left:250px;top:319.54px;font-size:13px;font-family:'Liberation Mono';">100</div>
<div class="t" style="left:6px;top:340.54px;font-size:13px;font-family:'Liberation Mono';color:#008000;">"Tutorial-i3...</div>
<div class="t" style="left:135px;top:340.54px;font-size:13px;font-family:'Liberation Mono';">100</div>
<div class="t" style="left:197px;top:340.54px;font-size:13px;font-family:'Liberation Mono';">100</div>
<div class="t" style="left:250px;top:340.54px;font-size:13px;font-family:'Liberation Mono';">100</div>
<div class="t" style="left:6px;top:361.54px;font-size:13px;font-family:'Liberation Mono';color:#008000;">"Tutorial-i3...</div>
<div class="t" style="left:135px;top:361.54px;font-size:13px;font-family:'Liberation Mono';">100</div>
<div class="t" style="left:197px;top:361.54px;font-size:13px;font-family:'Liberation Mono';">100</div>
<div class="t" style="left:250px;top:361.54px;font-size:13px;font-family:'Liberation Mono';">100</div>
</div>
<div class="a" style="left:868px;top:40px;width:20px;height:390px;background-color:#eeeae2;background-image:repeating-conic-gradient(#d4d0c8 0 25%, #fff 0 50%);background-size:2px 2px;"></div>
<div class="a" style="left:868px;top:40px;width:20px;height:20px;background:#d4d0c8;box-shadow:inset -1px -1px #404040,inset 1px 1px #fff,inset -2px -2px #808080;"></div>
<svg class="a" style="left:868.5px;top:41px" width="19" height="18"><polygon points="5,11 14,11 9.5,6" fill="#000"/></svg>
<div class="a" style="left:868px;top:60px;width:20px;height:90px;background:#d4d0c8;box-shadow:inset -1px -1px #404040,inset 1px 1px #fff,inset -2px -2px #808080;"></div>
<div class="a" style="left:868px;top:411px;width:20px;height:19px;background:#d4d0c8;box-shadow:inset -1px -1px #404040,inset 1px 1px #fff,inset -2px -2px #808080;"></div>
<svg class="a" style="left:868.5px;top:411px" width="19" height="19"><polygon points="5,7 14,7 9.5,12" fill="#000"/></svg>
<div class="a" style="left:931px;top:38px;width:89px;height:26px;background:#d4d0c8;box-shadow:inset -1px -1px #404040,inset 1px 1px #fff,inset -2px -2px #808080;"></div>
<div class="t" style="left:946px;top:43.57px;font-size:13.5px;">New Scan</div>
<div class="a" style="left:1030px;top:38px;width:89px;height:26px;background:#d4d0c8;box-shadow:inset -1px -1px #404040,inset 1px 1px #fff,inset -2px -2px #808080;"></div>
<div class="t" style="left:1043.5px;top:43.57px;font-size:13.5px;">Next Scan</div>
<div class="a" style="left:1176px;top:38px;width:104px;height:26px;background:#d4d0c8;box-shadow:inset -1px -1px #404040,inset 1px 1px #fff,inset -2px -2px #808080;"></div>
<div class="t" style="left:1190px;top:44.57px;font-size:13.5px;color:#fff;">Undo Scan</div>
<div class="t" style="left:1189px;top:43.57px;font-size:13.5px;color:#808080;">Undo Scan</div>
<div class="t" style="left:959px;top:75.57px;font-size:13.5px;letter-spacing:0.2px;">Value:</div>
<div class="t" style="left:906px;top:95.57px;font-size:13.5px;">Hex</div>
<div class="a" style="left:940px;top:94px;width:16px;height:16px;background:#fff;box-shadow:inset 1px 1px #808080,inset 2px 2px #404040,inset -1px -1px #fff,inset -2px -2px #d4d0c8;"></div>
<div class="a" style="left:959px;top:90px;width:290px;height:25px;background:#fff;box-shadow:inset 1px 1px #808080,inset 2px 2px #404040,inset -1px -1px #fff,inset -2px -2px #d4d0c8;"></div>
<div class="t" style="left:963px;top:95.57px;font-size:13.5px;">100</div>
<div class="t" style="left:892px;top:127.57px;font-size:13.5px;letter-spacing:0.3px;">Scan Type</div>
<div class="a" style="left:959px;top:121px;width:213px;height:25px;background:#fff;box-shadow:inset 1px 1px #808080,inset 2px 2px #404040,inset -1px -1px #fff,inset -2px -2px #d4d0c8;"></div>
<div class="t" style="left:963px;top:127.57px;font-size:13.5px;letter-spacing:0.2px;">Exact Value</div>
<div class="a" style="left:1150px;top:123px;width:20px;height:21px;background:#d4d0c8;box-shadow:inset 1px 1px #d4d0c8,inset 2px 2px #fff,inset -1px -1px #404040,inset -2px -2px #808080;"></div>
<svg class="a" style="left:1150px;top:123px" width="20" height="21"><polygon points="4.7,7.5 14.3,7.5 9.5,12.5" fill="#000"/></svg>
<div class="t" style="left:890px;top:153.57px;font-size:13.5px;letter-spacing:0.2px;">Value Type</div>
<div class="a" style="left:959px;top:148px;width:213px;height:25px;background:#fff;box-shadow:inset 1px 1px #808080,inset 2px 2px #404040,inset -1px -1px #fff,inset -2px -2px #d4d0c8;"></div>
<div class="t" style="left:963px;top:153.57px;font-size:13.5px;color:#808080;letter-spacing:0.2px;">4 Bytes</div>
<div class="a" style="left:1150px;top:150px;width:20px;height:21px;background:#d4d0c8;box-shadow:inset 1px 1px #d4d0c8,inset 2px 2px #fff,inset -1px -1px #404040,inset -2px -2px #808080;"></div>
<svg class="a" style="left:1150px;top:150px" width="20" height="21"><polygon points="4.7,7.5 14.3,7.5 9.5,12.5" fill="#808080"/><polyline points="14.3,8 10,12.8" stroke="#fff" stroke-width="1.2"/></svg>
<div class="a" style="left:959px;top:177px;width:16px;height:16px;background:#fff;box-shadow:inset 1px 1px #808080,inset 2px 2px #404040,inset -1px -1px #fff,inset -2px -2px #d4d0c8;"></div>
<div class="t" style="left:981px;top:178.57px;font-size:13.5px;letter-spacing:0.1px;">Compare to first scan</div>
<div class="a" style="left:1178px;top:125px;width:16px;height:16px;background:#fff;box-shadow:inset 1px 1px #808080,inset 2px 2px #404040,inset -1px -1px #fff,inset -2px -2px #d4d0c8;"></div>
<div class="t" style="left:1200px;top:126.57px;font-size:13.5px;">Lua formula</div>
<div class="a" style="left:1178px;top:150px;width:16px;height:16px;background:#fff;box-shadow:inset 1px 1px #808080,inset 2px 2px #404040,inset -1px -1px #fff,inset -2px -2px #d4d0c8;"></div>
<div class="t" style="left:1200px;top:151.57px;font-size:13.5px;">Not</div>
<div class="a" style="left:1178px;top:187px;width:16px;height:16px;background:#fff;box-shadow:inset 1px 1px #808080,inset 2px 2px #404040,inset -1px -1px #fff,inset -2px -2px #d4d0c8;"></div>
<div class="t" style="left:1200px;top:188.57px;font-size:13.5px;">Unrandomizer</div>
<div class="a" style="left:1178px;top:212px;width:16px;height:16px;background:#fff;box-shadow:inset 1px 1px #808080,inset 2px 2px #404040,inset -1px -1px #fff,inset -2px -2px #d4d0c8;"></div>
<div class="t" style="left:1200px;top:213.57px;font-size:13.5px;">Enable Speedhack</div>
<div class="a" style="left:931px;top:213px;width:240px;height:214px;box-shadow:inset 1px 1px #808080,inset 2px 2px #fff,inset -1px -1px #fff,inset -2px -2px #808080;"></div>
<div class="a" style="left:938px;top:205px;width:135px;height:12px;background:#d4d0c8;"></div>
<div class="t" style="left:941px;top:208.57px;font-size:13.5px;color:#fff;letter-spacing:0.1px;">Memory Scan Options</div>
<div class="t" style="left:940px;top:207.57px;font-size:13.5px;color:#808080;letter-spacing:0.1px;">Memory Scan Options</div>
<div class="a" style="left:939px;top:224px;width:224px;height:25px;background:#fff;box-shadow:inset 1px 1px #808080,inset 2px 2px #404040,inset -1px -1px #fff,inset -2px -2px #d4d0c8;"></div>
<div class="t" style="left:944px;top:230.57px;font-size:13.5px;color:#fff;">All</div>
<div class="t" style="left:943px;top:229.57px;font-size:13.5px;color:#808080;">All</div>
<div class="a" style="left:1143px;top:226px;width:19px;height:21px;background:#d4d0c8;box-shadow:inset 1px 1px #d4d0c8,inset 2px 2px #fff,inset -1px -1px #404040,inset -2px -2px #808080;"></div>
<svg class="a" style="left:1143px;top:226px" width="19" height="21"><polygon points="4.5,8 14,8 9.25,13" fill="#808080"/><polyline points="14,8.5 9.8,13.3" stroke="#fff" stroke-width="1.2"/></svg>
<div class="t" style="left:940px;top:256.57px;font-size:13.5px;color:#fff;">Start</div>
<div class="t" style="left:939px;top:255.57px;font-size:13.5px;color:#808080;">Start</div>
<div class="a" style="left:974px;top:251px;width:189px;height:21px;background:#fff;box-shadow:inset 1px 1px #808080,inset 2px 2px #404040,inset -1px -1px #fff,inset -2px -2px #d4d0c8;"></div>
<div class="t" style="left:981px;width:180px;text-align:right;top:256.04px;font-size:13px;font-family:'Liberation Mono';color:#999;">0000000000000000</div>
<div class="t" style="left:940px;top:278.57px;font-size:13.5px;color:#fff;">Stop</div>
<div class="t" style="left:939px;top:277.57px;font-size:13.5px;color:#808080;">Stop</div>
<div class="a" style="left:974px;top:275px;width:189px;height:20px;background:#fff;box-shadow:inset 1px 1px #808080,inset 2px 2px #404040,inset -1px -1px #fff,inset -2px -2px #d4d0c8;"></div>
<div class="t" style="left:981px;width:180px;text-align:right;top:279.04px;font-size:13px;font-family:'Liberation Mono';color:#999;">00007fffffffffff</div>
<div class="a" style="left:935px;top:299px;width:16px;height:16px;background:#d4d0c8;box-shadow:inset 1px 1px #808080,inset 2px 2px #404040,inset -1px -1px #fff,inset -2px -2px #d4d0c8;"></div>
<svg class="a" style="left:935px;top:299px" width="16" height="16"><polyline points="4,7 6.5,10 11.5,4.5" fill="none" stroke="#808080" stroke-width="2"/></svg>
<div class="t" style="left:958px;top:301.57px;font-size:13.5px;color:#fff;">Writable</div>
<div class="t" style="left:957px;top:300.57px;font-size:13.5px;color:#808080;">Writable</div>
<div class="a" style="left:1073px;top:299px;width:16px;height:16px;background:#d4d0c8;box-shadow:inset 1px 1px #808080,inset 2px 2px #404040,inset -1px -1px #fff,inset -2px -2px #d4d0c8;"></div>
<svg class="a" style="left:1073px;top:299px" width="16" height="16"><polyline points="4,7 6.5,10 11.5,4.5" fill="none" stroke="#808080" stroke-width="2"/></svg>
<div class="t" style="left:1095px;top:301.57px;font-size:13.5px;color:#fff;">Executable</div>
<div class="t" style="left:1094px;top:300.57px;font-size:13.5px;color:#808080;">Executable</div>
<div class="a" style="left:935px;top:324px;width:16px;height:16px;background:#d4d0c8;box-shadow:inset 1px 1px #808080,inset 2px 2px #404040,inset -1px -1px #fff,inset -2px -2px #d4d0c8;"></div>
<div class="t" style="left:958px;top:326.57px;font-size:13.5px;color:#fff;">CopyOnWrite</div>
<div class="t" style="left:957px;top:325.57px;font-size:13.5px;color:#808080;">CopyOnWrite</div>
<div class="a" style="left:935px;top:362px;width:16px;height:16px;background:#d4d0c8;box-shadow:inset 1px 1px #808080,inset 2px 2px #404040,inset -1px -1px #fff,inset -2px -2px #d4d0c8;"></div>
<svg class="a" style="left:935px;top:362px" width="16" height="16"><polyline points="4,7 6.5,10 11.5,4.5" fill="none" stroke="#808080" stroke-width="2"/></svg>
<div class="t" style="left:958px;top:364.57px;font-size:13.5px;color:#fff;">Fast Scan</div>
<div class="t" style="left:957px;top:363.57px;font-size:13.5px;color:#808080;">Fast Scan</div>
<div class="a" style="left:1022px;top:359px;width:40px;height:24px;background:#fff;box-shadow:inset 1px 1px #808080,inset 2px 2px #404040,inset -1px -1px #fff,inset -2px -2px #d4d0c8;"></div>
<div class="t" style="left:1038px;top:363.57px;font-size:13.5px;color:#808080;">4</div>
<svg class="a" style="left:1066px;top:350px" width="15" height="40"><circle cx="7" cy="7" r="6" fill="#d4d0c8"/><path d="M2.5,11.5 A6,6 0 0 1 11.5,2.5" stroke="#808080" fill="none" stroke-width="1.5"/><path d="M11.5,2.5 A6,6 0 0 1 2.5,11.5" stroke="#fff" fill="none" stroke-width="1.5"/><circle cx="7" cy="7" r="2.5" fill="#808080"/><g transform="translate(0,25)"><circle cx="7" cy="7" r="6" fill="#d4d0c8"/><path d="M2.5,11.5 A6,6 0 0 1 11.5,2.5" stroke="#404040" fill="none" stroke-width="1.5"/><path d="M11.5,2.5 A6,6 0 0 1 2.5,11.5" stroke="#fff" fill="none" stroke-width="1.5"/></g></svg>
<div class="t" style="left:1088px;top:351.57px;font-size:13.5px;color:#fff;">Alignment</div>
<div class="t" style="left:1087px;top:350.57px;font-size:13.5px;color:#808080;">Alignment</div>
<div class="t" style="left:1088px;top:375.57px;font-size:13.5px;color:#fff;">Last Digits</div>
<div class="t" style="left:1087px;top:374.57px;font-size:13.5px;color:#808080;">Last Digits</div>
<div class="a" style="left:935px;top:404px;width:16px;height:16px;background:#d4d0c8;box-shadow:inset 1px 1px #808080,inset 2px 2px #404040,inset -1px -1px #fff,inset -2px -2px #d4d0c8;"></div>
<div class="t" style="left:958px;top:406.57px;font-size:13.5px;color:#fff;">Pause the game while scanning</div>
<div class="t" style="left:957px;top:405.57px;font-size:13.5px;color:#808080;">Pause the game while scanning</div>
<div class="a" style="left:890px;top:397px;width:36px;height:35px;background:#d4d0c8;box-shadow:inset -1px -1px #404040,inset 1px 1px #fff,inset -2px -2px #808080;"></div>
<svg class="a" style="left:890px;top:397px" width="36" height="35"><line x1="8" y1="8" x2="22" y2="22" stroke="#d03030" stroke-width="3"/><polygon points="27,27 14,22 22,14" fill="#d03030"/></svg>
<div class="a" style="left:930px;top:437px;width:36px;height:36px;background:#d4d0c8;box-shadow:inset -1px -1px #404040,inset 1px 1px #fff,inset -2px -2px #808080;"></div>
<svg class="a" style="left:930px;top:437px" width="36" height="36"><circle cx="17.5" cy="17.5" r="10" fill="none" stroke="#d03030" stroke-width="2"/><line x1="11" y1="24" x2="24" y2="11" stroke="#d03030" stroke-width="2"/></svg>
<div class="a" style="left:567px;top:447px;width:158px;height:20px;background:#d4d0c8;box-shadow:inset -1px -1px #404040,inset 1px 1px #fff,inset -2px -2px #808080;"></div>
<div class="t" style="left:605px;top:449.57px;font-size:13.5px;">Memory View</div>
<div class="a" style="left:1169px;top:446px;width:121px;height:21px;background:#d4d0c8;box-shadow:inset -1px -1px #404040,inset 1px 1px #fff,inset -2px -2px #808080;"></div>
<div class="t" style="left:1182px;top:449.57px;font-size:13.5px;">Add Address</div>
<div class="a" style="left:567px;top:477px;width:680px;height:50px;background:#fff;box-shadow:inset 0 1px #404040,inset 0 2px #808080;"></div>
<div class="a" style="left:567px;top:478px;width:1px;height:50px;background:#808080;"></div>
<div class="a" style="left:569px;top:480px;width:41px;height:22px;background:#d4d0c8;box-shadow:inset -1px -1px #404040,inset 1px 1px #fff,inset -2px -2px #808080;"></div>
<div class="a" style="left:610px;top:480px;width:161px;height:22px;background:#d4d0c8;box-shadow:inset -1px -1px #404040,inset 1px 1px #fff,inset -2px -2px #808080;"></div>
<div class="a" style="left:771px;top:480px;width:142px;height:22px;background:#d4d0c8;box-shadow:inset -1px -1px #404040,inset 1px 1px #fff,inset -2px -2px #808080;"></div>
<div class="a" style="left:913px;top:480px;width:81px;height:22px;background:#d4d0c8;box-shadow:inset -1px -1px #404040,inset 1px 1px #fff,inset -2px -2px #808080;"></div>
<div class="a" style="left:994px;top:480px;width:266px;height:22px;background:#d4d0c8;box-shadow:inset -1px -1px #404040,inset 1px 1px #fff,inset -2px -2px #808080;"></div>
<div class="t" style="left:571px;top:485.07px;font-size:13.5px;">Active</div>
<div class="t" style="left:612px;top:485.07px;font-size:13.5px;">Description</div>
<div class="t" style="left:772px;top:485.07px;font-size:13.5px;">Address</div>
<div class="t" style="left:915px;top:485.07px;font-size:13.5px;">Type</div>
<div class="t" style="left:996px;top:485.07px;font-size:13.5px;">Value</div>
<div class="a" style="left:0px;top:707px;width:59px;height:150px;background:#d4d0c8;"></div>
<div class="a" style="left:0px;top:707px;width:59px;height:2px;background:#fff;"></div>
<div class="a" style="left:0px;top:709px;width:59px;height:2px;background:#404040;"></div>
<div class="a" style="left:0px;top:713px;width:59px;height:2px;background:#404040;"></div>
<div class="t" style="left:-4px;top:713.07px;font-size:20px;">ow is th</div>
<div class="t" style="left:-4px;top:736.07px;font-size:20px;">n gets c</div>
<div class="a" style="left:0px;top:802px;width:57px;height:1px;background:#fff;"></div>
<div class="t" style="left:0px;top:812.07px;font-size:20px;">lth: 95</div>
<div class="a" style="left:-10px;top:839px;width:59px;height:30px;background:#d4d0c8;box-shadow:inset -1px 0 #404040,inset 0 1px #fff,inset -2px 0 #808080;"></div>
<div class="t" style="left:-2px;top:849.07px;font-size:20px;">r me</div>
<div class="a" style="left:59px;top:524px;width:1200px;height:340px;background:#d4d0c8;"></div>
<div class="a" style="left:60px;top:525px;width:1200px;height:1px;background:#fff;"></div>
<div class="a" style="left:60px;top:525px;width:1px;height:340px;background:#fff;"></div>
<div class="a" style="left:63px;top:528px;width:1190px;height:24px;background:linear-gradient(90deg,#0a246a 0px,#a6caf0 1190px);"></div>
<svg class="a" style="left:66px;top:531px" width="20" height="20" viewBox="0 0 20 20"><path d="M12.54,3.56 L15.78,1.33 L14.53,5.06 Z M10.00,3.00 L12.00,-0.39 L12.44,3.52 Z M7.00,3.80 L7.03,-0.13 L9.37,3.03 Z M4.36,6.95 L1.86,3.91 L5.68,4.83 Z M4.13,10.25 L0.40,9.00 L4.13,7.75 Z M5.68,13.17 L1.86,14.09 L4.36,11.05 Z M9.37,14.97 L7.03,18.13 L7.00,14.20 Z M12.44,14.48 L12.00,18.39 L10.00,15.00 Z M14.53,12.94 L15.78,16.67 L12.54,14.44 Z " fill="#157595" stroke="#000" stroke-width="1" stroke-linejoin="round"/><path d="M14.75,5.01 A6.2,6.2 0 1 0 14.75,12.99" fill="none" stroke="#000" stroke-width="4"/><path d="M14.75,5.01 A6.2,6.2 0 1 0 14.75,12.99" fill="none" stroke="#157a9a" stroke-width="2"/><path d="M6.5,9 H14" stroke="#000" stroke-width="2.2"/></svg>
<div class="t" style="left:90px;top:532.61px;font-size:17px;font-weight:bold;color:#fff;transform:scaleX(1.192);transform-origin:0 0;">[#] Lua Engine [#]</div>
<div class="t" style="left:72px;top:556.46px;font-size:16px;letter-spacing:0.3px;">File</div>
<div class="t" style="left:116px;top:556.46px;font-size:16px;letter-spacing:0.3px;">View</div>
<div class="a" style="left:63px;top:585px;width:1200px;height:182px;box-shadow:inset 1px 1px #808080,inset 2px 2px #fff,inset 0 -1px #fff,inset 0 -2px #808080;"></div>
<div class="a" style="left:70px;top:578px;width:47px;height:12px;background:#d4d0c8;"></div>
<div class="t" style="left:72px;top:580.57px;font-size:13.5px;letter-spacing:0.6px;">Output</div>
<div class="a" style="left:65px;top:598px;width:1200px;height:167px;background:#fff;box-shadow:inset 2px 2px #404040,inset 0 -1px #fff,inset 0 -2px #d4d0c8;"></div>
<div class="t" style="left:72px;top:602.07px;font-size:13.5px;letter-spacing:0.15px;">Start session 1. Process: 00000514-Tutorial-i386.exe</div>
<div class="t" style="left:72px;top:619.07px;font-size:13.5px;letter-spacing:0.45px;">Wed Oct  6 06:27:37 2021</div>
<div class="t" style="left:253px;top:619.07px;font-size:13.5px;letter-spacing:0.15px;">First scan. Scan type "Exact Value". Value 100. Value type "4 Bytes". Found 66</div>
<div class="t" style="left:72px;top:636.07px;font-size:13.5px;letter-spacing:0.45px;">Wed Oct  6 06:29:19 2021</div>
<div class="t" style="left:253px;top:636.07px;font-size:13.5px;letter-spacing:0.15px;">Next scan1. Scan type "Exact Value". Value 100. Found 66</div>
<div class="t" style="left:72px;top:653.07px;font-size:13.5px;letter-spacing:0.04px;">memscan_nextScan(getCurrentMemscan(), soExactValue, rtRounded, "95", nil, false, false, false, false, false)</div>
<div class="a" style="left:63px;top:772px;width:1200px;height:90px;background:#fff;box-shadow:inset 1px 1px #808080,inset 2px 2px #404040;"></div>
<div class="a" style="left:65px;top:774px;width:53px;height:90px;background:#d4d0c8;"></div>
<div class="a" style="left:118px;top:775px;width:1px;height:90px;background:#808080;"></div>
<div class="a" style="left:119px;top:774px;width:13px;height:90px;background:#d4d0c8;"></div>
<div class="a" style="left:133px;top:774px;width:1099px;height:20px;background:#dedede;"></div>
<div class="a" style="left:934px;top:774px;width:1px;height:90px;background:#c0c0c0;"></div>
<div class="t" style="left:94px;width:20px;text-align:right;top:778.77px;font-size:14px;font-family:'Liberation Mono';">1</div>
<div class="t" style="left:133px;top:777.22px;font-size:16.67px;font-family:'Liberation Mono';font-weight:bold;color:#0080c0;">memscan_nextScan</div>
<div class="t" style="left:293px;top:777.22px;font-size:16.67px;font-family:'Liberation Mono';">(</div>
<div class="t" style="left:303px;top:777.22px;font-size:16.67px;font-family:'Liberation Mono';font-weight:bold;color:#0080c0;">getCurrentMemscan</div>
<div class="t" style="left:473px;top:777.22px;font-size:16.67px;font-family:'Liberation Mono';">(), soExactValue, rtRounded, </div>
<div class="t" style="left:763px;top:777.22px;font-size:16.67px;font-family:'Liberation Mono';color:#e02020;">&quot;95&quot;</div>
<div class="t" style="left:803px;top:777.22px;font-size:16.67px;font-family:'Liberation Mono';">, </div>
<div class="t" style="left:823px;top:777.22px;font-size:16.67px;font-family:'Liberation Mono';font-weight:bold;color:#0000ff;">nil</div>
<div class="t" style="left:853px;top:777.22px;font-size:16.67px;font-family:'Liberation Mono';">, </div>
<div class="t" style="left:873px;top:777.22px;font-size:16.67px;font-family:'Liberation Mono';font-weight:bold;color:#0000ff;">false</div>
<div class="t" style="left:923px;top:777.22px;font-size:16.67px;font-family:'Liberation Mono';">, </div>
<div class="t" style="left:943px;top:777.22px;font-size:16.67px;font-family:'Liberation Mono';font-weight:bold;color:#0000ff;">false</div>
<div class="t" style="left:993px;top:777.22px;font-size:16.67px;font-family:'Liberation Mono';">, </div>
<div class="t" style="left:1013px;top:777.22px;font-size:16.67px;font-family:'Liberation Mono';font-weight:bold;color:#0000ff;">false</div>
<div class="t" style="left:1063px;top:777.22px;font-size:16.67px;font-family:'Liberation Mono';">, </div>
<div class="t" style="left:1083px;top:777.22px;font-size:16.67px;font-family:'Liberation Mono';font-weight:bold;color:#0000ff;">false</div>
<div class="t" style="left:1133px;top:777.22px;font-size:16.67px;font-family:'Liberation Mono';">, </div>
<div class="t" style="left:1153px;top:777.22px;font-size:16.67px;font-family:'Liberation Mono';font-weight:bold;color:#0000ff;">false</div>
<div class="t" style="left:1203px;top:777.22px;font-size:16.67px;font-family:'Liberation Mono';">)</div>
<div class="a" style="left:794px;top:776px;width:1px;height:17px;background:#000;"></div>
<div class="a" style="left:1232px;top:774px;width:10px;height:90px;background-color:#eeeae2;background-image:repeating-conic-gradient(#d4d0c8 0 25%, #fff 0 50%);background-size:2px 2px;"></div>
<div class="a" style="left:1232px;top:775px;width:10px;height:19px;background:#d4d0c8;box-shadow:inset 1px 1px #d4d0c8,inset 2px 2px #fff,inset 0 -1px #404040,inset 0 -2px #808080;"></div>
<svg class="a" style="left:1232px;top:775px" width="8" height="19"><polygon points="4,11.5 8,11.5 8,8 7,7.5" fill="#000"/><polygon points="3.5,11.5 7.5,7.2 8,7.2 8,11.5" fill="#000"/></svg>
<svg class="a" style="left:0;top:0;overflow:visible" width="1240" height="857"><defs><filter id="sh" x="-10%" y="-50%" width="120%" height="300%"><feGaussianBlur in="SourceAlpha" stdDeviation="2"/><feOffset dx="2" dy="3"/><feComponentTransfer><feFuncA type="linear" slope="0.45"/></feComponentTransfer><feMerge><feMergeNode/><feMergeNode in="SourceGraphic"/></feMerge></filter></defs><g filter="url(#sh)" stroke="#ff0000" fill="none" stroke-linecap="round"><ellipse cx="634.5" cy="30" rx="95" ry="18.5" stroke-width="3.2" transform="rotate(-0.2 634.5 30)"/><line x1="6" y1="143" x2="458" y2="143" stroke-width="3.5"/><line x1="5" y1="190" x2="456" y2="190" stroke-width="3.5"/></g></svg>
</body></html>
